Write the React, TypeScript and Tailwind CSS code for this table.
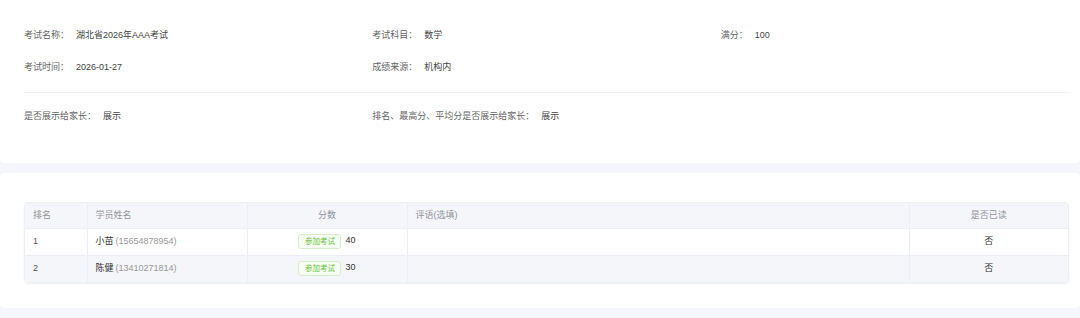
import React from "react";

const font = { fontFamily: '"Liberation Sans", "Noto Sans CJK SC", sans-serif' };

function Field({ label, value }: { label: string; value: string }) {
  return (
    <div className="flex items-center h-[32px] text-[9px] leading-none">
      <span className="text-[#666]">{label}：</span>
      <span className="ml-[7px] text-[#444]">{value}</span>
    </div>
  );
}

const rows = [
  { rank: "1", name: "小苗", phone: "(15654878954)", score: "40", read: "否" },
  { rank: "2", name: "陈健", phone: "(13410271814)", score: "30", read: "否" },
];

export default function App() {
  return (
    <div className="w-[1080px] h-[318px] bg-[#f4f6fb] overflow-hidden" style={font}>
      <div className="bg-white rounded-b-[4px] h-[163px] pl-[24px] pr-[11px] pt-[19px]">
        <div className="grid grid-cols-3">
          <Field label="考试名称" value="湖北省2026年AAA考试" />
          <Field label="考试科目" value="数学" />
          <Field label="满分" value="100" />
          <Field label="考试时间" value="2026-01-27" />
          <Field label="成绩来源" value="机构内" />
          <div />
        </div>
        <div className="mt-[9px] border-t border-[#f0f0f0]" />
        <div className="grid grid-cols-3 mt-[7px]">
          <Field label="是否展示给家长" value="展示" />
          <div className="col-span-2">
            <Field label="排名、最高分、平均分是否展示给家长" value="展示" />
          </div>
        </div>
      </div>
      <div className="mt-[10px] bg-white rounded-[4px] h-[135px] pl-[24px] pr-[11px] pt-[29px]">
        <div className="rounded-[4px] border border-[#ebeef5] overflow-hidden shadow-[0_1px_2px_rgba(0,0,0,0.06)]">
          <table className="w-full table-fixed border-collapse text-[9px] leading-none">
            <colgroup>
              <col className="w-[62px]" />
              <col className="w-[160px]" />
              <col className="w-[160px]" />
              <col className="w-[502px]" />
              <col />
            </colgroup>
            <thead>
              <tr className="bg-[#f5f6f9] h-[25px] text-[#909399]">
                <th className="text-left font-normal pl-[8px] border-r border-[#ebeef5]">排名</th>
                <th className="text-left font-normal pl-[8px] border-r border-[#ebeef5]">学员姓名</th>
                <th className="text-center font-normal border-r border-[#ebeef5]">分数</th>
                <th className="text-left font-normal pl-[8px] border-r border-[#ebeef5]">评语(选填)</th>
                <th className="text-center font-normal">是否已读</th>
              </tr>
            </thead>
            <tbody>
              {rows.map((r, i) => (
                <tr
                  key={r.rank}
                  className={`h-[27px] border-t border-[#ebeef5] text-[#555] ${i % 2 === 1 ? "bg-[#f5f6f9]" : "bg-white"}`}
                >
                  <td className="pl-[8px] border-r border-[#ebeef5]">{r.rank}</td>
                  <td className="pl-[8px] border-r border-[#ebeef5]">
                    <span className="text-[#333]">{r.name}</span>
                    <span className="ml-[2px] text-[#999]">{r.phone}</span>
                  </td>
                  <td className="border-r border-[#ebeef5]">
                    <div className="flex items-center justify-center">
                      <span className="inline-flex items-center justify-center h-[15px] w-[43px] rounded-[3px] border border-[#d5f0c8] bg-[#f7fcf4] text-[#67c23a] text-[7.5px]">
                        参加考试
                      </span>
                      <span className="ml-[4px] text-[#333] -mt-[2px]">{r.score}</span>
                    </div>
                  </td>
                  <td className="border-r border-[#ebeef5]"></td>
                  <td className="text-center text-[#333]">{r.read}</td>
                </tr>
              ))}
            </tbody>
          </table>
        </div>
      </div>
    </div>
  );
}
